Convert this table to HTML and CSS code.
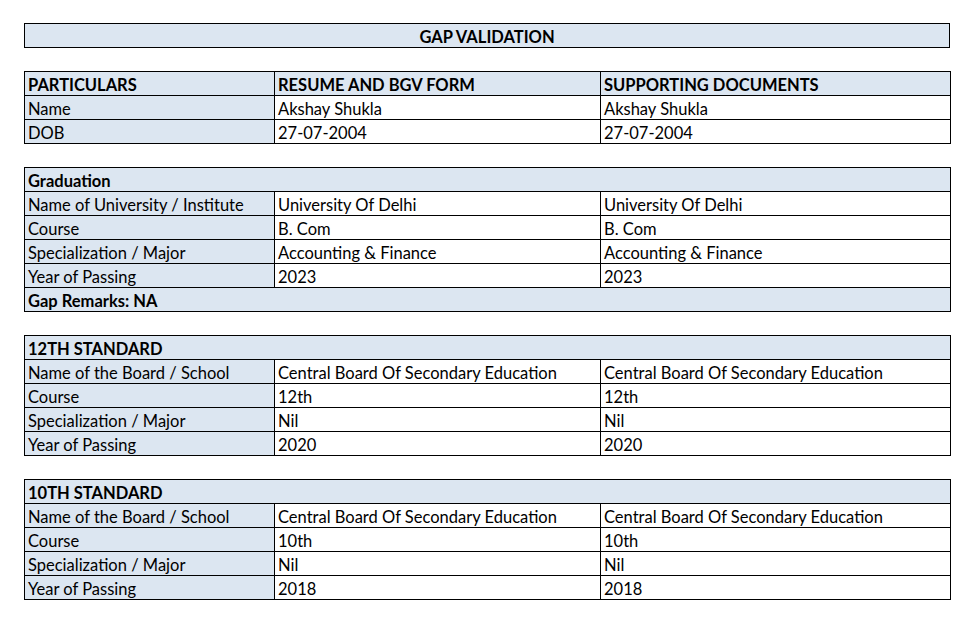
FILE: index.html
```html
<!DOCTYPE html>
<html>
<head>
<meta charset="utf-8">
<link rel="stylesheet" href="styles.css">
</head>
<body>
<div class="sheet">
  <table class="grid title-table">
    <tr><td class="hd title">GAP VALIDATION</td></tr>
  </table>

  <table class="grid">
    <colgroup><col class="c1"><col class="c2"><col class="c3"></colgroup>
    <tr class="hd"><td>PARTICULARS</td><td>RESUME AND BGV FORM</td><td>SUPPORTING DOCUMENTS</td></tr>
    <tr><td class="lbl">Name</td><td>Akshay Shukla</td><td>Akshay Shukla</td></tr>
    <tr><td class="lbl">DOB</td><td>27-07-2004</td><td>27-07-2004</td></tr>
  </table>

  <table class="grid">
    <colgroup><col class="c1"><col class="c2"><col class="c3"></colgroup>
    <tr class="hd"><td colspan="3">Graduation</td></tr>
    <tr><td class="lbl">Name of University / Institute</td><td>University Of Delhi</td><td>University Of Delhi</td></tr>
    <tr><td class="lbl">Course</td><td>B. Com</td><td>B. Com</td></tr>
    <tr><td class="lbl">Specialization / Major</td><td>Accounting &amp; Finance</td><td>Accounting &amp; Finance</td></tr>
    <tr><td class="lbl">Year of Passing</td><td>2023</td><td>2023</td></tr>
    <tr class="hd"><td colspan="3">Gap Remarks: NA</td></tr>
  </table>

  <table class="grid">
    <colgroup><col class="c1"><col class="c2"><col class="c3"></colgroup>
    <tr class="hd"><td colspan="3">12TH STANDARD</td></tr>
    <tr><td class="lbl">Name of the Board / School</td><td>Central Board Of Secondary Education</td><td>Central Board Of Secondary Education</td></tr>
    <tr><td class="lbl">Course</td><td>12th</td><td>12th</td></tr>
    <tr><td class="lbl">Specialization / Major</td><td>Nil</td><td>Nil</td></tr>
    <tr><td class="lbl">Year of Passing</td><td>2020</td><td>2020</td></tr>
  </table>

  <table class="grid">
    <colgroup><col class="c1"><col class="c2"><col class="c3"></colgroup>
    <tr class="hd"><td colspan="3">10TH STANDARD</td></tr>
    <tr><td class="lbl">Name of the Board / School</td><td>Central Board Of Secondary Education</td><td>Central Board Of Secondary Education</td></tr>
    <tr><td class="lbl">Course</td><td>10th</td><td>10th</td></tr>
    <tr><td class="lbl">Specialization / Major</td><td>Nil</td><td>Nil</td></tr>
    <tr><td class="lbl">Year of Passing</td><td>2018</td><td>2018</td></tr>
  </table>
</div>
</body>
</html>
```

FILE: styles.css
```css
html, body {
  margin: 0;
  padding: 0;
  background: #ffffff;
}
body {
  font-family: Lato, "Open Sans", "Noto Sans", sans-serif;
  font-size: 16.5px;
  color: #000000;
}
.sheet {
  padding: 23px 0 0 24px;
  display: flex;
  flex-direction: column;
  gap: 23px;
}
.grid {
  border-collapse: collapse;
  width: 926px;
  table-layout: fixed;
}
.c1 { width: 250px; }
.c2 { width: 326px; }
.c3 { width: 350px; }
.grid tr {
  height: 24px;
}
.grid td {
  border: 1px solid #000000;
  height: 24px;
  padding: 3px 3px 0;
  box-sizing: border-box;
  white-space: nowrap;
  overflow: hidden;
  vertical-align: middle;
  line-height: 20px;
}
.grid tr.hd td,
.grid td.hd {
  background: #dce6f1;
  font-weight: 700;
}
.grid td.lbl {
  background: #dce6f1;
}
.grid td.title {
  text-align: center;
}
```
